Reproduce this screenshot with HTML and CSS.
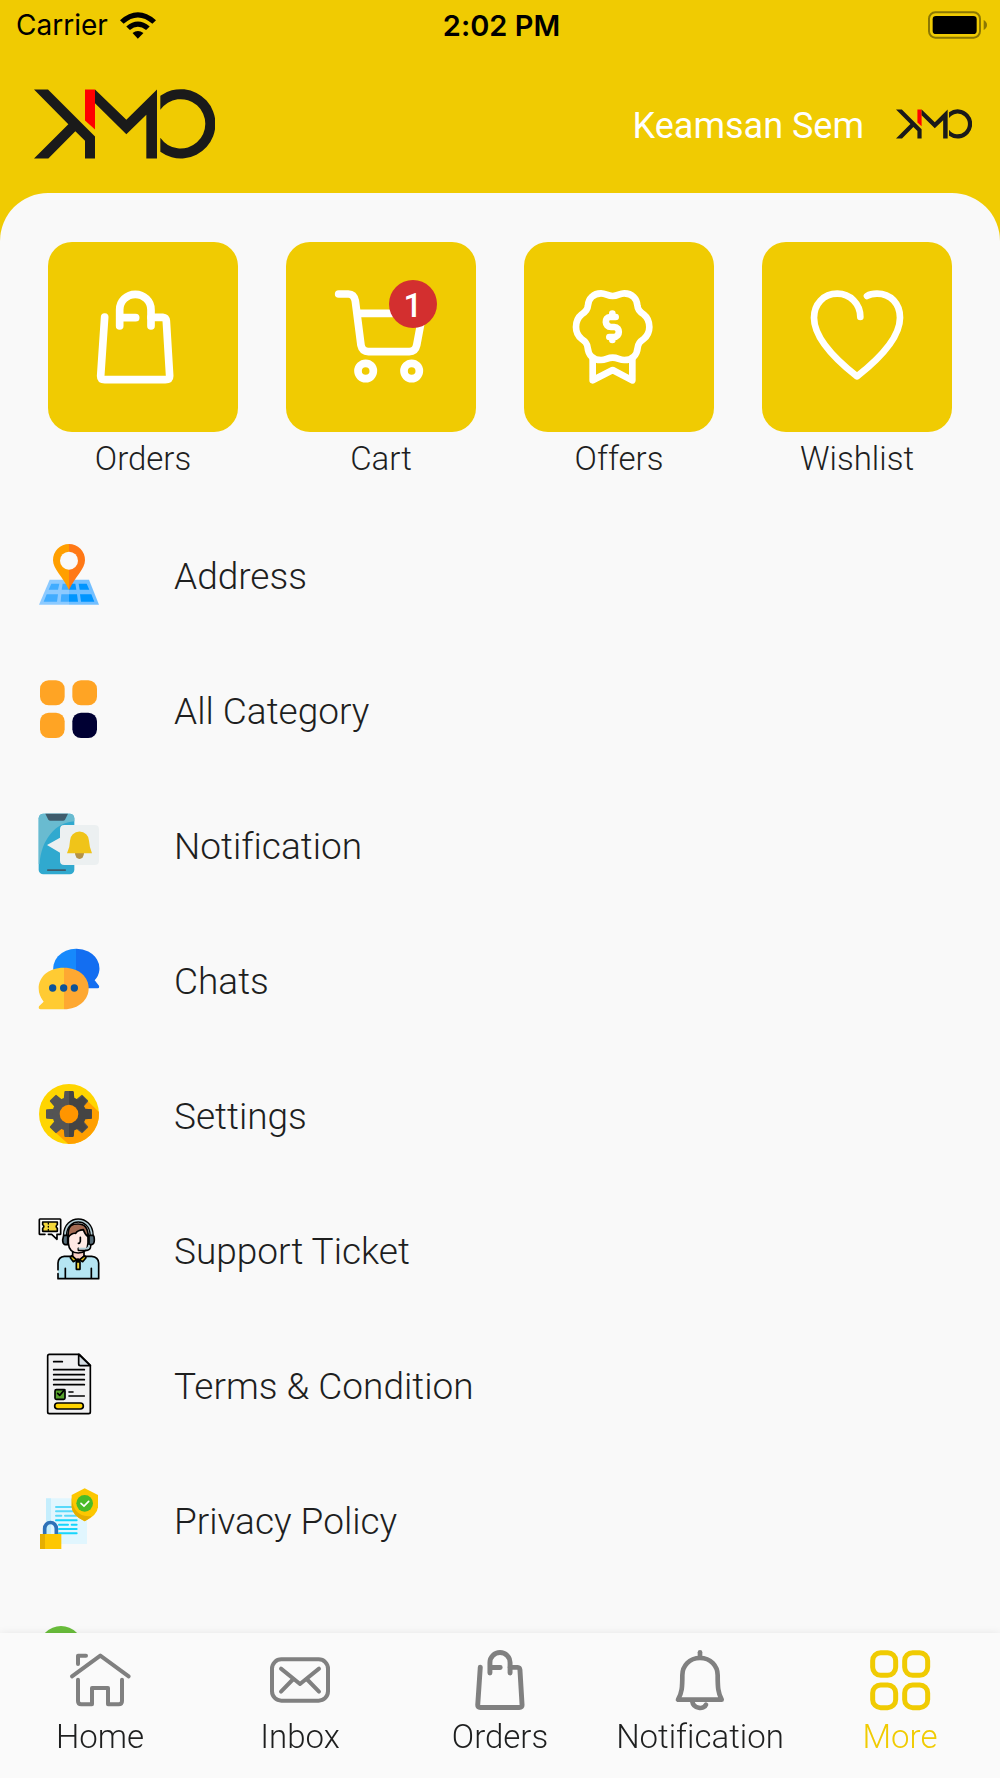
FILE: index.html
```html
<!DOCTYPE html>
<html lang="en">
<head>
  <meta charset="UTF-8" />
  <meta name="viewport" content="width=device-width, initial-scale=1.0"/>
  <title>KMO - More</title>
  <link rel="stylesheet" href="styles.css">
</head>
<body>
  <!-- Shared logo -->
  <svg class="sprite" aria-hidden="true">
    <symbol id="logo" viewBox="0 0 543 209">
      <path fill="#1a1a1a" d="M0 1H42L183 142V208H153V155L124 126 43 208H0L103 105Z"/>
      <path fill="#f00" d="M153 1H183V121L153 94Z"/>
      <path fill="#1a1a1a" d="M183 1 277 92 369 1V208H337V77L277 135 183 42Z"/>
      <path fill="#1a1a1a" d="M379 20A104 104 0 1 1 379 188V146A74 74 0 1 0 379 62Z"/>
    </symbol>
  </svg>

  <!-- Status bar -->
  <div class="status-bar">
    <div class="carrier">
      <span>Carrier</span>
      <svg class="wifi" viewBox="0 0 109 80">
        <path d="M0 24Q54-24 109 24L98 35Q54-4 11 35Z"/>
        <path d="M19 43Q54 13 90 43L79 54Q54 34 30 54Z"/>
        <path d="M38 63Q54 50 71 63L54 80Z"/>
      </svg>
    </div>
    <div class="time">2:02 PM</div>
    <svg class="battery" viewBox="0 0 177 82">
      <rect x="3" y="3" width="153" height="76" rx="19" fill="none" stroke="#8b7703" stroke-width="6"/>
      <rect x="14" y="14" width="132" height="54" rx="10"/>
      <path d="M167 26Q177 32 177 41T167 56Z" fill="#8b7703"/>
    </svg>
  </div>

  <header class="header">
    <svg class="logo" role="img" aria-label="KMO"><use href="#logo"/></svg>
    <a href="#profile" class="profile">
      <span>Keamsan Sem</span>
      <svg class="avatar"><use href="#logo"/></svg>
    </a>
  </header>

  <main class="sheet">
    <!-- Shortcuts -->
    <div class="tiles">
      <a href="#orders" class="tile">
        <span class="tile-box">
          <svg viewBox="54 35 570 570" stroke-width="23">
            <path d="M224 260 212 437Q212 448 224 448H406Q419 448 419 437L409 272Q408 262 398 261H363"/>
            <path d="M269 287V238A47 46 0 0 1 363 238V287M269 262H317"/>
          </svg>
        </span>
        <span>Orders</span>
      </a>
      <a href="#cart" class="tile">
        <span class="tile-box">
          <svg viewBox="768 35 570 570" stroke-width="23">
            <path d="M926 191H955Q972 191 976 212L993 345Q997 364 1015 364H1138Q1156 364 1160 345L1178 249H984"/>
            <circle cx="1007" cy="422" r="23"/>
            <circle cx="1145" cy="422" r="23"/>
          </svg>
          <span class="badge">1</span>
        </span>
        <span>Cart</span>
      </a>
      <a href="#offers" class="tile">
        <span class="tile-box">
          <svg viewBox="72 35 570 570" stroke-width="20">
            <path d="M338 197C322 197 318 189 303 189C280 189 265 205 264 225C263 237 258 245 245 252C235 260 228 273 228 290C228 307 235 318 245 326C256 333 262 340 263 352C265 375 280 389 303 389C318 389 322 382 338 382C354 382 358 389 373 389C396 389 411 375 413 352C414 340 420 333 431 326C441 318 448 307 448 290C448 273 441 260 431 252C418 245 413 237 412 225C411 205 396 189 373 189C358 189 354 197 338 197Z"/>
            <path d="M278 385V450L338 419 397 450V385"/>
            <path d="M337 250V258M347 260H330C313 260 313 290 333 290H343C361 290 361 320 342 320H328M337 322V329"/>
          </svg>
        </span>
        <span>Offers</span>
      </a>
      <a href="#wishlist" class="tile">
        <span class="tile-box">
          <svg viewBox="786 35 570 570" stroke-width="20">
            <path d="M1081 260C1081 220 1050 190 1012 190C970 190 942 222 942 262C942 325 1010 390 1071 438C1132 390 1200 325 1200 262C1200 220 1172 190 1131 190C1119 190 1109 192 1101 197"/>
          </svg>
        </span>
        <span>Wishlist</span>
      </a>
    </div>

    <!-- Menu list -->
    <nav class="menu">
      <a href="#address">
        <svg viewBox="0 0 180 180">
          <path fill="#8ccaff" d="M32 107H90V182H0Z"/>
          <path fill="#73bfff" d="M90 107H150L180 182H90Z"/>
          <path fill="#40acff" d="M37 119H61L57 137H29ZM71 119H90V137H68ZM23 151H57L54 173H14ZM67 151H90V173H65Z"/>
          <path fill="#0095ff" d="M90 119H109L112 137H90ZM119 119H143L151 137H122ZM90 151H114L117 173H90ZM123 151H157L166 173H126Z"/>
          <path fill="#ff9f00" d="M90 0A48 48 0 0 0 42 49C42 76 72 98 90 138Z"/>
          <path fill="#ff7816" d="M90 0A48 48 0 0 1 138 49C138 76 108 98 90 138Z"/>
          <circle cx="90" cy="50" r="27" fill="#f9f9f9"/>
        </svg>
        <span>Address</span>
      </a>
      <a href="#category">
        <svg viewBox="0 0 180 180">
          <g fill="#ffa424">
            <rect x="3" y="4" width="74" height="75" rx="26"/>
            <rect x="100" y="4" width="74" height="75" rx="26"/>
            <rect x="3" y="101" width="74" height="76" rx="26"/>
          </g>
          <rect x="100" y="101" width="74" height="76" rx="26" fill="#003"/>
        </svg>
        <span>All Category</span>
      </a>
      <a href="#notification">
        <svg viewBox="0 0 180 180">
          <rect x="-1" y="-1" width="107" height="182" rx="14" fill="#30a9cf"/>
          <path fill="#69bbd0" d="M-1 150V14Q-1-1 14-1H92Q106-1 106 14V22C50 25 6 78 2 150Z"/>
          <path fill="#3f5c6c" d="M19-1H87L78 17Q76 20 72 20H34Q30 20 28 17Z"/>
          <rect x="24" y="166" width="57" height="5" rx="2" fill="#3f5c6c"/>
          <path fill="#ecf0f1" d="M76 33H167Q180 33 180 46V140Q180 153 167 153H76Q63 153 63 140V116L24 93 63 71V46Q63 33 76 33Z"/>
          <path fill="#b59245" d="M108 117H135A13 17 0 0 1 108 117Z"/>
          <path fill="#f0c419" d="M84 118Q93 98 93 80A28 27 0 0 1 150 80Q151 98 159 118Z"/>
        </svg>
        <span>Notification</span>
      </a>
      <a href="#chats">
        <svg viewBox="0 0 180 180">
          <path fill="#1689fc" d="M111-1A68 59 0 0 0 45 73L111 80Z"/>
          <path fill="#136ef1" d="M111-1A69 59 0 0 1 167 94L180 110Q182 118 176 118H111Z"/>
          <path fill="#ffcb33" d="M75 56C25 56-1 86-1 118Q-1 140 14 158L0 172Q-3 181 5 181H75Z"/>
          <path fill="#fea832" d="M75 56C120 56 149 84 149 118S120 181 75 181Z"/>
          <g fill="#0c5298">
            <circle cx="41" cy="117" r="11"/>
            <circle cx="74" cy="117" r="11"/>
            <circle cx="106" cy="117" r="11"/>
          </g>
        </svg>
        <span>Chats</span>
      </a>
      <a href="#settings">
        <svg viewBox="0 0 180 180">
          <circle cx="90" cy="90" r="90" fill="#ffd500"/>
          <path fill="#ff9f00" d="M131 37 180 84A90 90 0 0 1 88 180L40 137Z"/>
          <g fill="#545454">
            <path id="tooth" d="M76 24Q76 21 79 21H101Q104 21 104 24L106 48H74Z"/>
            <use href="#tooth" transform="rotate(45 90 90)"/>
            <use href="#tooth" transform="rotate(90 90 90)"/>
            <use href="#tooth" transform="rotate(135 90 90)"/>
            <use href="#tooth" transform="rotate(180 90 90)"/>
            <use href="#tooth" transform="rotate(225 90 90)"/>
            <use href="#tooth" transform="rotate(270 90 90)"/>
            <use href="#tooth" transform="rotate(315 90 90)"/>
            <circle cx="90" cy="90" r="50"/>
          </g>
          <path fill="#444" d="M90 21H101L104 24 106 42 117 47 130 36 144 50 134 65 139 74 158 76V104L139 106 134 117 144 130 130 144 117 134 106 139 104 156 101 159H90Z"/>
          <circle cx="90" cy="90" r="28" fill="#ff9500"/>
        </svg>
        <span>Settings</span>
      </a>
      <a href="#support">
        <svg viewBox="0 0 180 180" stroke="#000" stroke-width="5" stroke-linejoin="round" stroke-linecap="round">
          <path fill="#fff" d="M18 46H3Q1 46 1 44V2Q1 0 3 0H63Q65 0 65 2V44Q65 46 63 46H54V61L38 46H28"/>
          <path fill="#f4d73b" d="M11 9H55V17Q48 22 55 28V37H11V28Q18 22 11 17Z"/>
          <path d="M28 12V15M28 22V24M28 31V34" stroke-width="4"/>
          <path fill="#f9d0c6" d="M101 96V112L117 130 135 112V96Z"/>
          <path fill="#b5e5f2" d="M57 152V132Q58 114 76 112H96L117 130 137 112H158Q178 114 179 132V179H57V164M79 148V178M157 148V178"/>
          <path fill="#e0c219" d="M98 110 94 116 103 128 117 120 131 128 141 116 137 110 117 126Z"/>
          <path fill="#f4d73b" d="M112 129H123V151H112Z"/>
          <path fill="#ffe9e4" d="M88 45V72Q90 102 118 102T147 72V45Q118 12 88 45Z"/>
          <path fill="#a56c54" d="M88 55C84 15 104 15 117 15C136 15 148 25 147 53Q139 48 133 32Q115 34 110 43Q98 41 88 55Z"/>
          <path d="M124 55V67Q123 73 118 73" fill="none"/>
          <path d="M78 48C80-10 156-10 158 48" fill="none" stroke-width="13"/>
          <path d="M78 48C80-10 156-10 158 48" fill="none" stroke="#b4ced6" stroke-width="5"/>
          <path fill="#566c78" d="M74 49H86V77H78Q71 75 71 63ZM150 49H162Q166 51 166 63T158 77H150Z"/>
          <path d="M118 88V94H144Q155 93 155 79" fill="none"/>
          <path d="M121 89H142Q149 88 150 80" fill="none" stroke="#b4ced6"/>
        </svg>
        <span>Support Ticket</span>
      </a>
      <a href="#terms">
        <svg viewBox="0 0 180 180" stroke="#000" stroke-width="5" stroke-linejoin="round" stroke-linecap="round">
          <path fill="#f1f1f2" d="M31 1H121L154 34V174Q154 179 149 179H31Q26 179 26 174V6Q26 1 31 1Z"/>
          <path fill="#d5dde3" d="M119 1V30Q119 35 124 35H154Z"/>
          <path d="M44 23H70M44 47H136M44 62H136M44 77H136M44 92H136M90 114H102M90 126H136"/>
          <rect x="48" y="107" width="30" height="29" rx="4" fill="#58a32c"/>
          <path d="M56 118 62 124 77 107" fill="none"/>
          <rect x="47" y="147" width="86" height="18" rx="9" fill="#ffd400"/>
        </svg>
        <span>Terms &amp; Condition</span>
      </a>
      <a href="#privacy">
        <svg viewBox="0 0 180 180">
          <path fill="#e1f6fe" d="M21 28H144V165H21Z"/>
          <path fill="#c5eefd" d="M21 28H36V165H21Z"/>
          <g stroke="#58d9fa" stroke-width="6" stroke-linecap="round">
            <path d="M51 54H113M51 67H113M51 80H67M78 80H113"/>
            <path d="M51 94H113M60 107H87M98 107H113M60 120H113M60 133H113" stroke="#16d5fb"/>
          </g>
          <path fill="#fdc700" d="M137-2 177 18V55Q174 80 137 97Q100 80 98 55V18Z"/>
          <path fill="#e5ae00" d="M98 25V55Q100 80 137 97Q150 90 158 81Q104 88 98 25Z"/>
          <circle cx="137" cy="43" r="25" fill="#4abb28"/>
          <path d="M126 43 135 51 149 37" fill="none" stroke="#fff" stroke-width="5" stroke-linecap="round"/>
          <path d="M17 135V119A17 18 0 0 1 52 119V135" fill="none" stroke="#2e71b8" stroke-width="11"/>
          <path fill="#fdc700" d="M3 135H67V180H3Z"/>
          <path fill="#e5ae00" d="M3 135H18V180H3Z"/>
        </svg>
        <span>Privacy Policy</span>
      </a>
      <a href="#help" aria-label="Help">
        <svg viewBox="0 0 180 180">
          <circle cx="66" cy="72" r="66" fill="#69bd3b"/>
        </svg>
      </a>
    </nav>
  </main>

  <!-- Bottom navigation -->
  <nav class="bottom-nav">
    <a href="#home">
      <svg viewBox="210 150 180 180" stroke-width="12">
        <path d="M216 229 301 167 386 229M234 192V167H258"/>
        <path d="M234 239V303Q234 313 244 313H276V264H324V313H356Q366 313 366 303V239"/>
      </svg>
      <span>Home</span>
    </a>
    <a href="#inbox">
      <svg viewBox="810 150 180 180" stroke-width="12">
        <rect x="816" y="178" width="168" height="124" rx="28"/>
        <path d="M843 206 900 252 957 206M877 240 843 275M923 240 957 275"/>
      </svg>
      <span>Inbox</span>
    </a>
    <a href="#orders">
      <svg viewBox="176 180 280 280" stroke-width="23">
        <path d="M224 260 212 437Q212 448 224 448H406Q419 448 419 437L409 272Q408 262 398 261H363"/>
        <path d="M269 287V238A47 46 0 0 1 363 238V287M269 262H317"/>
      </svg>
      <span>Orders</span>
    </a>
    <a href="#notification">
      <svg viewBox="510 150 180 180" stroke-width="14">
        <path d="M600 157V172"/>
        <path d="M600 174C568 174 547 198 547 226C547 262 546 278 534 299H665C654 278 653 262 653 226C653 198 632 174 600 174Z"/>
        <path d="M577 305C580 326 612 330 618 314"/>
      </svg>
      <span>Notification</span>
    </a>
    <a href="#more" class="active">
      <svg viewBox="1110 150 180 180" stroke-width="15">
        <rect x="1118" y="158" width="69" height="68" rx="24"/>
        <rect x="1214" y="158" width="69" height="68" rx="24"/>
        <rect x="1118" y="255" width="69" height="68" rx="24"/>
        <rect x="1214" y="255" width="69" height="68" rx="24"/>
      </svg>
      <span>More</span>
    </a>
  </nav>
</body>
</html>
```
FILE: styles.css
```css
* {
  box-sizing: border-box;
}
body {
  margin: 0;
  height: 100vh;
  display: flex;
  flex-direction: column;
  font-family: Roboto, sans-serif;
  font-weight: 300;
  font-variant-ligatures: none;
  color: #1e1f1f;
  background-color: #f0cb02;
}
a {
  color: inherit;
  text-decoration: none;
}
svg {
  display: block;
  overflow: visible;
}
.sprite {
  position: absolute;
  width: 0;
  height: 0;
}

/* Status bar */
.status-bar {
  display: grid;
  grid-template-columns: 1fr auto 1fr;
  align-items: center;
  height: 50px;
  padding: 0 13px 0 16px;
  font-family: Inter, sans-serif;
  font-size: 28px;
  color: #000;
}
.carrier {
  display: flex;
  align-items: center;
  gap: 12px;
  font-weight: 400;
}
.wifi {
  width: 36px;
  height: 27px;
}
.time {
  font-size: 29px;
  font-weight: 600;
}
.battery {
  width: 59px;
  height: 28px;
  justify-self: end;
}

/* Header */
.header {
  display: flex;
  align-items: center;
  justify-content: space-between;
  height: 143px;
  padding: 5px 28px 0 34px;
}
.logo {
  width: 181px;
  height: 70px;
}
.profile {
  display: flex;
  align-items: center;
  gap: 32px;
  font-size: 36px;
  font-weight: 400;
  color: #fff;
}
.profile span {
  padding-top: 4px;
}
.avatar {
  width: 76px;
  height: 30px;
}

/* Content sheet */
.sheet {
  flex: 1;
  min-height: 0;
  overflow-y: auto;
  scrollbar-width: none;
  padding-top: 49px;
  border-radius: 48px 48px 0 0;
  background-color: #f9f9f9;
}
.tiles {
  display: grid;
  grid-template-columns: repeat(4, 1fr);
  gap: 48px;
  padding: 0 48px;
}
.tile {
  text-align: center;
  font-size: 33px;
  line-height: 54px;
}
.tile-box {
  display: block;
  position: relative;
  border-radius: 24px;
  background-color: #f0cb02;
}
.tile-box svg {
  width: 100%;
  fill: none;
  stroke: #fff;
  stroke-linecap: round;
  stroke-linejoin: round;
}
.badge {
  position: absolute;
  top: 38px;
  right: 39px;
  width: 48px;
  height: 48px;
  border-radius: 50%;
  background-color: #d32f2f;
  color: #fff;
  font-size: 33px;
  font-weight: 500;
  line-height: 52px;
}

/* Menu list */
.menu {
  padding-top: 20px;
}
.menu a {
  display: flex;
  align-items: center;
  gap: 75px;
  height: 135px;
  padding-left: 39px;
  font-size: 37px;
}
.menu svg {
  width: 60px;
  height: 60px;
}
.menu span {
  padding-top: 5px;
}

/* Bottom navigation */
.bottom-nav {
  position: relative;
  display: grid;
  grid-template-columns: repeat(5, 1fr);
  height: 145px;
  padding-top: 17px;
  background-color: #fafafa;
  box-shadow: 0 0 8px rgba(0, 0, 0, 0.08);
}
.bottom-nav a {
  display: flex;
  flex-direction: column;
  align-items: center;
  font-size: 33px;
  line-height: 54px;
}
.bottom-nav svg {
  width: 60px;
  height: 60px;
  fill: none;
  stroke: #808080;
  stroke-linecap: round;
  stroke-linejoin: round;
}
.bottom-nav .active {
  color: #f0cb02;
}
.bottom-nav .active svg {
  stroke: #f0cb02;
}
```
